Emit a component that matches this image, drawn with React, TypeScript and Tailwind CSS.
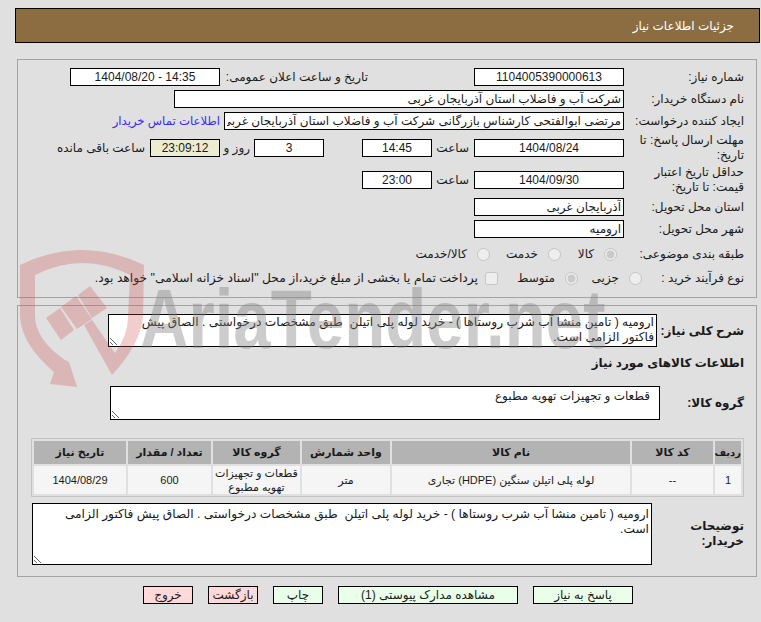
function Box({ value, className, align = "center" }: { value: string; className: string; align?: "center" | "right" }) {
  return (
    <input
      readOnly
      value={value}
      className={`h-[18px] border border-black px-[2px] outline-none ${align === "center" ? "text-center" : "text-right"} ${className}`}
    />
  )
}

function Option({ label, checked, className }: { label: string; checked?: boolean; className: string }) {
  return (
    <label className={`flex items-center gap-[10px] ${className}`}>
      <input type="radio" disabled checked={checked} readOnly className="h-[13px] w-[13px] shrink-0" />
      <span>{label}</span>
    </label>
  )
}

const columns = [
  { title: "ردیف", value: "1", width: "w-[26px] text-[10px]" },
  { title: "کد کالا", value: "--", width: "w-[81px]" },
  { title: "نام کالا", value: "لوله پلی اتیلن سنگین (HDPE) تجاری", width: "w-[238px]" },
  { title: "واحد شمارش", value: "متر", width: "w-[88px]" },
  { title: "گروه کالا", value: "قطعات و تجهیزات تهویه مطبوع", width: "w-[87px]" },
  { title: "تعداد / مقدار", value: "600", width: "w-[83px]" },
  { title: "تاریخ نیاز", value: "1404/08/29", width: "w-[92px]" },
]

const buttons = [
  { label: "پاسخ به نیاز", cls: "w-[100px] bg-[#eaffea]" },
  { label: "مشاهده مدارک پیوستی (1)", cls: "w-[180px] bg-[#eaffea]" },
  { label: "چاپ", cls: "w-[50px] bg-[#eaffea]" },
  { label: "بازگشت", cls: "w-[50px] bg-[#ffd9d9]" },
  { label: "خروج", cls: "w-[50px] bg-[#ffd9d9]" },
]

function Watermark() {
  return (
    <div dir="ltr" className="pointer-events-none absolute inset-0">
      <svg width="761" height="622" className="absolute left-0 top-0">
        <g fill="#d04848" fillOpacity="0.27">
          <path d="M20 265 Q82 235 144 265 L143 317 Q140 345 112 375 L84 325 L92 320 L115 353 Q128 335 128 317 L130 275 Q83 251 35 275 L35 317 Q36 340 65 360 L69 362 L77 387 L50 384 L54 372 Q22 345 20 317 Z" />
          <path d="M46 318 L60 308 L74 330 L61 340 Z" />
          <path d="M61 307 L76 296 L92 319 L77 329 Z" />
          <path d="M78 295 L90 286 L107 308 L92 318 Z" />
        </g>
      </svg>
      <div className="absolute left-[140px] top-[289px] origin-left scale-x-[0.8] whitespace-nowrap font-[family-name:'Liberation_Sans',sans-serif] text-[84px] font-bold leading-[60px] text-[#80808066]">
        AriaTender.net
      </div>
    </div>
  )
}

export default function App() {
  return (
    <div
      dir="rtl"
      className="relative h-[622px] w-[761px] overflow-hidden bg-[#e0e0e0] pt-[8px] font-[family-name:'Liberation_Sans','DejaVu_Sans',sans-serif] text-[12px] text-[#1a1a1a]"
    >
      <div className="mr-[1px] flex h-[35px] w-[745px] items-center border border-black bg-[#8c6d42] pr-[25px] text-[white]">
        جزئیات اطلاعات نیاز
      </div>

      <div className="mr-[4px] mt-[16px] w-[740px] border border-[#a3a3a3] pb-[10px] pr-[12px] pt-[8px]">
        <div className="flex h-[18px] items-center">
          <div className="w-[120px]">شماره نیاز:</div>
          <Box value="1104005390000613" className="w-[150px] bg-white" />
          <div className="w-[254px] pr-[106px]">تاریخ و ساعت اعلان عمومی:</div>
          <Box value="14:35 - 1404/08/20" className="w-[150px] bg-white" />
        </div>
        <div className="mt-[4px] flex h-[18px] items-center">
          <div className="w-[120px]">نام دستگاه خریدار:</div>
          <Box value="شرکت آب و فاضلاب استان آذربایجان غربی" align="right" className="w-[450px] bg-white" />
        </div>
        <div className="mt-[4px] flex h-[18px] items-center">
          <div className="w-[120px]">ایجاد کننده درخواست:</div>
          <Box value="مرتضی ابوالفتحی کارشناس بازرگانی شرکت آب و فاضلاب استان آذربایجان غربی" align="right" className="w-[400px] bg-white" />
          <a className="mr-[4px] whitespace-nowrap text-[11.7px] text-[#3a2cf0]">اطلاعات تماس خریدار</a>
        </div>
        <div className="mt-[3px] flex h-[30px] items-center">
          <div className="w-[120px] leading-[15px]">مهلت ارسال پاسخ: تا تاریخ:</div>
          <Box value="1404/08/24" className="w-[150px] bg-white" />
          <div className="w-[42px] pr-[5px]">ساعت</div>
          <Box value="14:45" className="w-[70px] bg-white" />
          <div className="w-[38px]" />
          <Box value="3" className="w-[70px] bg-white" />
          <div className="w-[34px] pr-[4px]">روز و</div>
          <Box value="23:09:12" className="w-[70px] bg-[#ecedd0]" />
          <div className="whitespace-nowrap pr-[5px]">ساعت باقی مانده</div>
        </div>
        <div className="mt-[2px] flex h-[30px] items-center">
          <div className="w-[120px] leading-[15px]">حداقل تاریخ اعتبار قیمت: تا تاریخ:</div>
          <Box value="1404/09/30" className="w-[150px] bg-white" />
          <div className="w-[42px] pr-[5px]">ساعت</div>
          <Box value="23:00" className="w-[70px] bg-white" />
        </div>
        <div className="mt-[3px] flex h-[18px] items-center">
          <div className="w-[120px]">استان محل تحویل:</div>
          <Box value="آذربایجان غربی" align="right" className="w-[150px] bg-white" />
        </div>
        <div className="mt-[4px] flex h-[18px] items-center">
          <div className="w-[120px]">شهر محل تحویل:</div>
          <Box value="ارومیه" align="right" className="w-[150px] bg-white" />
        </div>
        <div className="mt-[7px] flex h-[18px] items-center">
          <div className="w-[127px]">طبقه بندی موضوعی:</div>
          <Option label="کالا" checked className="w-[56px]" />
          <Option label="خدمت" className="w-[71px]" />
          <Option label="کالا/خدمت" className="" />
        </div>
        <div className="mt-[6px] flex h-[18px] items-center">
          <div className="w-[102px]">نوع فرآیند خرید :</div>
          <Option label="جزیی" className="w-[64px]" />
          <Option label="متوسط" checked className="w-[80px]" />
          <label className="flex items-center gap-[7px] whitespace-nowrap">
            <input type="checkbox" disabled className="h-[13px] w-[13px] shrink-0" />
            <span className="text-[12.3px]">پرداخت تمام یا بخشی از مبلغ خرید،از محل "اسناد خزانه اسلامی" خواهد بود.</span>
          </label>
        </div>
      </div>

      <div className="mr-[4px] mt-[7px] w-[740px] border border-[#a3a3a3] pb-[11px] pr-[12px] pt-[8px]">
        <div className="flex items-center">
          <div className="w-[87px] font-bold">شرح کلی نیاز:</div>
          <textarea
            readOnly
            defaultValue="ارومیه ( تامین منشا آب شرب روستاها ) - خرید لوله پلی اتیلن  طبق مشخصات درخواستی . الصاق پیش فاکتور الزامی است."
            className="block h-[33px] w-[549px] border border-black bg-white pl-[17px] pr-[2px] text-[12.2px] leading-[15px] outline-none"
          />
        </div>
        <div className="mt-[7px] h-[16px] font-bold">اطلاعات کالاهای مورد نیاز</div>
        <div className="mt-[16px] flex items-center">
          <div className="w-[84px] font-bold">گروه کالا:</div>
          <textarea
            readOnly
            defaultValue="قطعات و تجهیزات تهویه مطبوع"
            className="block h-[34px] w-[550px] border border-black bg-white pr-[9px] pt-[2px] leading-[15px] outline-none"
          />
        </div>
        <table className="mt-[18px] w-[713px] table-fixed border-separate border-spacing-[2px] border border-[#c4c4c4] text-[11px]">
          <thead>
            <tr>
              {columns.map((c) => (
                <th key={c.title} className={`h-[23px] bg-[#b3b3b3] p-0 text-center font-bold ${c.width}`}>
                  {c.title}
                </th>
              ))}
            </tr>
          </thead>
          <tbody>
            <tr>
              {columns.map((c) => (
                <td key={c.title} className="h-[28px] bg-[#f5f5f5] p-0 px-[2px] text-center leading-[14px]">
                  {c.value}
                </td>
              ))}
            </tr>
          </tbody>
        </table>
        <div className="mt-[6px] flex items-center">
          <div className="w-[92px] font-bold leading-[15px]">توضیحات خریدار:</div>
          <textarea
            readOnly
            defaultValue="ارومیه ( تامین منشا آب شرب روستاها ) - خرید لوله پلی اتیلن  طبق مشخصات درخواستی . الصاق پیش فاکتور الزامی است."
            className="block h-[62px] w-[620px] border border-black bg-white pl-[17px] pr-[2px] pt-[3px] text-[12.2px] leading-[15px] outline-none"
          />
        </div>
      </div>

      <div className="mr-[128px] mt-[9px] flex gap-[15px]">
        {buttons.map((b) => (
          <button key={b.label} className={`h-[18px] border border-black text-[12px] leading-none ${b.cls}`}>
            {b.label}
          </button>
        ))}
      </div>

      <Watermark />
    </div>
  )
}
